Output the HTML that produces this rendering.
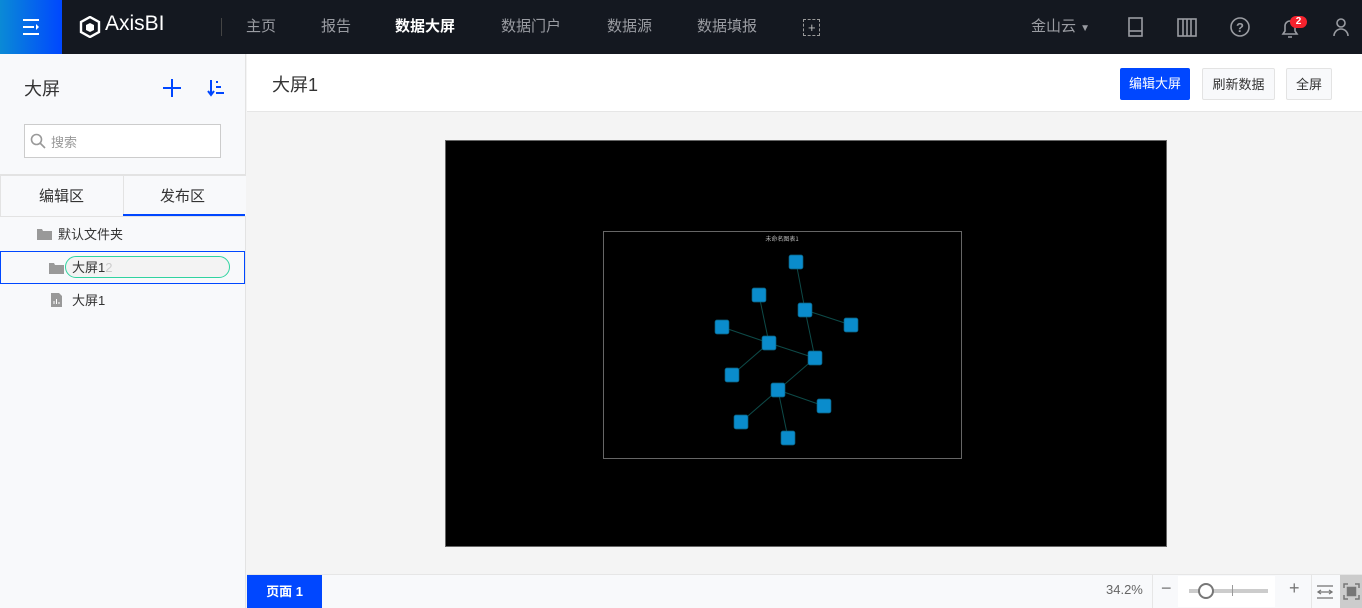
<!DOCTYPE html>
<html><head><meta charset="utf-8"><style>
*{margin:0;padding:0;box-sizing:border-box}
body{width:1362px;height:608px;overflow:hidden;font-family:"Liberation Sans","Noto Sans CJK SC",sans-serif;background:#f4f4f4;position:relative}
.top{position:absolute;left:0;top:0;width:1362px;height:54px;background:#141820}
.menu{position:absolute;left:0;top:0;width:62px;height:54px;background:linear-gradient(90deg,#0a8ad6,#0047ff)}
.nav{position:absolute;top:15px;font-size:15px;color:#9a9ca2}
.abs{position:absolute}
.side{position:absolute;left:0;top:54px;width:246px;height:554px;background:#f8f9fb;border-right:1px solid #e3e3e3}
.btn{position:absolute;top:68px;height:32px;font-size:13px;line-height:31px;text-align:center;border-radius:2px}
</style></head><body>
<div class="top"></div>
<div class="menu">
<svg width="62" height="54"><g stroke="#fff" stroke-width="2"><line x1="23" y1="20" x2="39" y2="20"/><line x1="23" y1="27" x2="34" y2="27"/><line x1="23" y1="34" x2="39" y2="34"/></g><path d="M36 24 l3 3 -3 3z" fill="#fff"/></svg>
</div>
<svg class="abs" style="left:79px;top:16px" width="22" height="22" viewBox="0 0 22 22"><path d="M11 1 L20 6 V16 L11 21 L2 16 V6Z" fill="none" stroke="#fff" stroke-width="2.4"/><path d="M7 9 L11 7 L15 9 V14 L11 16 L7 14Z" fill="#fff"/></svg>
<div class="abs" style="left:105px;top:12px;font-size:21px;color:#fff">AxisBI</div>
<div class="abs" style="left:221px;top:18px;width:1px;height:18px;background:#444"></div>
<div class="nav" style="left:246px">主页</div>
<div class="nav" style="left:321px">报告</div>
<div class="nav" style="left:395px;color:#fff;font-weight:bold">数据大屏</div>
<div class="nav" style="left:501px">数据门户</div>
<div class="nav" style="left:607px">数据源</div>
<div class="nav" style="left:697px">数据填报</div>
<div class="abs" style="left:803px;top:19px;width:17px;height:17px;border:1px dashed #999"></div>
<div class="abs" style="left:808px;top:20px;color:#bbb;font-size:13px">+</div>
<div class="nav" style="left:1031px">金山云 <span style="font-size:10px">▼</span></div>
<svg class="abs" style="left:1125px;top:16px" width="240" height="24" fill="none" stroke="#9a9ca2" stroke-width="1.6">
<rect x="4" y="2" width="13" height="18"/><line x1="4" y1="15" x2="17" y2="15"/>
<rect x="53" y="3" width="18" height="17"/><line x1="58" y1="3" x2="58" y2="20"/><line x1="62" y1="3" x2="62" y2="20"/><line x1="66" y1="3" x2="66" y2="20"/>
<circle cx="115" cy="11" r="9"/><text x="111" y="16" fill="#9a9ca2" stroke="none" font-size="13" font-weight="bold" font-family="Liberation Sans">?</text>
<path d="M158 18 H172 L170 15 V10 A5 5 0 0 0 160 10 V15Z M163 21 H167"/>
<circle cx="216" cy="7" r="4"/><path d="M209 20 A7 7 0 0 1 223 20"/>
</svg>
<div class="abs" style="left:1290px;top:16px;width:17px;height:12px;border-radius:6px;background:#f5222d;color:#fff;font-size:10px;text-align:center;line-height:12px;font-weight:bold">2</div>

<div class="side">
<div class="abs" style="left:24px;top:21px;font-size:18px;color:#333">大屏</div>
<svg class="abs" style="left:162px;top:24px" width="20" height="20" stroke="#0047ff" stroke-width="2"><line x1="10" y1="1" x2="10" y2="19"/><line x1="1" y1="10" x2="19" y2="10"/></svg>
<svg class="abs" style="left:207px;top:25px" width="18" height="18" stroke="#0047ff" stroke-width="2"><line x1="4" y1="1" x2="4" y2="15"/><path d="M1 12 L4 16 L7 12" fill="none"/><line x1="9" y1="3" x2="11" y2="3"/><line x1="9" y1="8" x2="14" y2="8"/><line x1="9" y1="14" x2="17" y2="14"/></svg>
<div class="abs" style="left:24px;top:70px;width:197px;height:34px;background:#fff;border:1px solid #ccc"></div>
<svg class="abs" style="left:30px;top:79px" width="16" height="16" fill="none" stroke="#999" stroke-width="1.6"><circle cx="6.5" cy="6.5" r="5"/><line x1="10" y1="10" x2="15" y2="15"/></svg>
<div class="abs" style="left:51px;top:78px;font-size:13px;color:#999">搜索</div>
<div class="abs" style="left:0;top:120px;width:246px;height:43px;border-top:2px solid #e3e3e3;border-bottom:1px solid #e3e3e3;background:#f8f9fb"></div>
<div class="abs" style="left:0;top:120px;width:124px;height:43px;border:1px solid #e3e3e3"></div>
<div class="abs" style="left:39px;top:131px;font-size:15px;color:#333">编辑区</div>
<div class="abs" style="left:160px;top:131px;font-size:15px;color:#333">发布区</div>
<div class="abs" style="left:123px;top:160px;width:122px;height:2px;background:#0047ff"></div>
<svg class="abs" style="left:37px;top:174px" width="15" height="12"><path d="M0 1 H5 L6 3 H15 V12 H0Z" fill="#999"/></svg>
<div class="abs" style="left:58px;top:170px;font-size:13px;color:#333">默认文件夹</div>
<div class="abs" style="left:0;top:197px;width:245px;height:33px;border:1px solid #0047ff"></div>
<svg class="abs" style="left:49px;top:208px" width="15" height="12"><path d="M0 1 H5 L6 3 H15 V12 H0Z" fill="#999"/></svg>
<div class="abs" style="left:65px;top:202px;width:165px;height:22px;border:1px solid #2fd3a0;border-radius:11px;background:#f3f3f3"></div>
<div class="abs" style="left:72px;top:203px;font-size:13px;color:#333">大屏1<span style="color:#ccc">2</span></div>
<svg class="abs" style="left:51px;top:239px" width="11" height="14"><path d="M0 0 H8 L11 3 V14 H0Z" fill="#999"/><g stroke="#fff"><line x1="3" y1="11" x2="3" y2="8"/><line x1="5.5" y1="11" x2="5.5" y2="6"/><line x1="8" y1="11" x2="8" y2="9"/></g></svg>
<div class="abs" style="left:72px;top:236px;font-size:13px;color:#333">大屏1</div>
</div>

<div class="abs" style="left:247px;top:54px;width:1115px;height:58px;background:#fff;border-bottom:1px solid #e6e6e6"></div>
<div class="abs" style="left:272px;top:71px;font-size:18px;color:#333">大屏1</div>
<div class="btn" style="left:1120px;width:70px;background:#0047ff;color:#fff">编辑大屏</div>
<div class="btn" style="left:1202px;width:73px;background:#f8f9fb;border:1px solid #e3e3e3;color:#333">刷新数据</div>
<div class="btn" style="left:1286px;width:46px;background:#f8f9fb;border:1px solid #e3e3e3;color:#333">全屏</div>

<div class="abs" style="left:445px;top:140px;width:722px;height:407px;background:#000;border:1px solid #666"></div>
<svg class="abs" style="left:0;top:0" width="1362" height="608">
<rect x="603.5" y="231.5" width="358" height="227" fill="none" stroke="#666"/>
<text x="782" y="241" fill="#bbb" font-size="6" text-anchor="middle" font-family="Noto Sans CJK SC">未命名图表1</text>
<g stroke="#0d4a48" stroke-width="1">
<line x1="796" y1="262" x2="805" y2="310"/><line x1="805" y1="310" x2="851" y2="325"/><line x1="805" y1="310" x2="815" y2="358"/>
<line x1="759" y1="295" x2="769" y2="343"/><line x1="722" y1="327" x2="769" y2="343"/><line x1="769" y1="343" x2="815" y2="358"/>
<line x1="769" y1="343" x2="732" y2="375"/><line x1="815" y1="358" x2="778" y2="390"/><line x1="778" y1="390" x2="824" y2="406"/>
<line x1="778" y1="390" x2="741" y2="422"/><line x1="778" y1="390" x2="788" y2="438"/></g>
<g fill="#0a8ccc" stroke="#0a5d7a" stroke-width="0.7">
<rect x="789" y="255" width="14" height="14" rx="2"/><rect x="752" y="288" width="14" height="14" rx="2"/>
<rect x="798" y="303" width="14" height="14" rx="2"/><rect x="844" y="318" width="14" height="14" rx="2"/>
<rect x="715" y="320" width="14" height="14" rx="2"/><rect x="762" y="336" width="14" height="14" rx="2"/>
<rect x="808" y="351" width="14" height="14" rx="2"/><rect x="725" y="368" width="14" height="14" rx="2"/>
<rect x="771" y="383" width="14" height="14" rx="2"/><rect x="817" y="399" width="14" height="14" rx="2"/>
<rect x="734" y="415" width="14" height="14" rx="2"/><rect x="781" y="431" width="14" height="14" rx="2"/></g>
</svg>

<div class="abs" style="left:247px;top:574px;width:1115px;height:34px;background:#f8f9fb;border-top:1px solid #e6e6e6"></div>
<div class="abs" style="left:247px;top:575px;width:75px;height:33px;background:#0047ff;color:#fff;font-size:13px;font-weight:bold;text-align:center;line-height:33px">页面 1</div>
<div class="abs" style="left:1106px;top:582px;font-size:13px;color:#666">34.2%</div>
<div class="abs" style="left:1152px;top:575px;width:1px;height:33px;background:#e6e6e6"></div>
<div class="abs" style="left:1161px;top:578px;font-size:18px;color:#777">−</div>
<div class="abs" style="left:1178px;top:576px;width:97px;height:31px;background:#fff"></div>
<div class="abs" style="left:1189px;top:589px;width:79px;height:4px;background:#ccc"></div>
<div class="abs" style="left:1232px;top:585px;width:1px;height:11px;background:#999"></div>
<div class="abs" style="left:1198px;top:583px;width:16px;height:16px;border-radius:50%;background:#fff;border:2px solid #777"></div>
<div class="abs" style="left:1289px;top:578px;font-size:18px;color:#777">+</div>
<div class="abs" style="left:1311px;top:575px;width:1px;height:33px;background:#e6e6e6"></div>
<svg class="abs" style="left:1316px;top:584px" width="18" height="16" stroke="#777" stroke-width="1.3" fill="none"><line x1="1" y1="2" x2="17" y2="2"/><line x1="1" y1="14" x2="17" y2="14"/><line x1="2" y1="8" x2="16" y2="8"/><path d="M5 6 L2 8 L5 10 M13 6 L16 8 L13 10"/></svg>
<div class="abs" style="left:1340px;top:575px;width:22px;height:33px;background:#ccc"></div>
<svg class="abs" style="left:1343px;top:583px" width="17" height="17" stroke="#777" stroke-width="1.5" fill="none"><path d="M1 5 V1 H5 M12 1 H16 V5 M16 12 V16 H12 M5 16 H1 V12"/><rect x="4.5" y="4.5" width="8" height="8" fill="#777"/></svg>
</body></html>
